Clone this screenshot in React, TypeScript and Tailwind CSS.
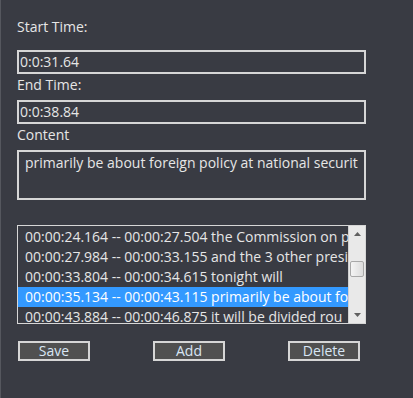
import React from "react";

const rows = [
  "00:00:24.164 -- 00:00:27.504 the Commission on p",
  "00:00:27.984 -- 00:00:33.155 and the 3 other presi",
  "00:00:33.804 -- 00:00:34.615 tonight will",
  "00:00:35.134 -- 00:00:43.115 primarily be about fo",
  "00:00:43.884 -- 00:00:46.875 it will be divided rou",
];

const font = { fontFamily: '"Open Sans", "Noto Sans", sans-serif' };

export default function App() {
  return (
    <div
      className="w-[413px] h-[398px] bg-[#393b43] border-l border-[#55575e] overflow-hidden text-[#e6e6e6] text-[14px]"
      style={font}
    >
      <div className="flex flex-col pl-[16px] w-[365px]">
        <div className="mt-[17px] h-[20px] leading-[20px]">Start Time:</div>
        <div className="mt-[13px] h-[24px] border-2 border-[#d6d6d6] leading-[20px] pl-[1px]">
          0:0:31.64
        </div>
        <div className="h-[26px] leading-[22px]">End Time:</div>
        <div className="h-[24px] border-2 border-[#d6d6d6] leading-[20px] pl-[1px]">
          0:0:38.84
        </div>
        <div className="h-[26px] leading-[22px]">Content</div>
        <div className="h-[50px] border-2 border-[#d6d6d6] pl-[6px] pt-[1px] leading-[20px] overflow-hidden whitespace-nowrap">
          primarily be about foreign policy at national securit
        </div>
        <div className="mt-[25px] h-[99px] border border-[#d6d6d6] flex overflow-hidden">
          <div className="flex-1 flex flex-col pt-[1px] overflow-hidden">
            {rows.map((r, i) => (
              <div
                key={i}
                className={`h-[20px] shrink-0 leading-[20px] pl-[7px] whitespace-nowrap overflow-hidden ${
                  i === 3 ? "bg-[#3399ff] text-white" : ""
                }`}
              >
                {r}
              </div>
            ))}
          </div>
          <div className="w-[17px] bg-[#e9e9e9] flex flex-col items-center justify-between border-l border-[#d0d0d0]">
            <svg width="17" height="16" viewBox="0 0 17 16">
              <path d="M5 10 L8.5 6 L12 10 Z" fill="#606060" />
            </svg>
            <div className="flex-1 w-full px-[1px]">
              <div className="mt-[19px] h-[16px] w-full rounded-[2px] border border-[#a8a8a8] bg-gradient-to-r from-[#f4f4f4] to-[#dcdcdc]" />
            </div>
            <svg width="17" height="16" viewBox="0 0 17 16">
              <path d="M5 6 L8.5 10 L12 6 Z" fill="#606060" />
            </svg>
          </div>
        </div>
        <div className="mt-[17px] flex justify-between pl-[1px] pr-[6px]">
          {["Save", "Add", "Delete"].map((b) => (
            <div
              key={b}
              className="w-[72px] h-[20px] border-2 border-[#d6d6d6] bg-[#505050] text-[#d8e6f4] flex items-center justify-center leading-none"
            >
              {b}
            </div>
          ))}
        </div>
      </div>
    </div>
  );
}
